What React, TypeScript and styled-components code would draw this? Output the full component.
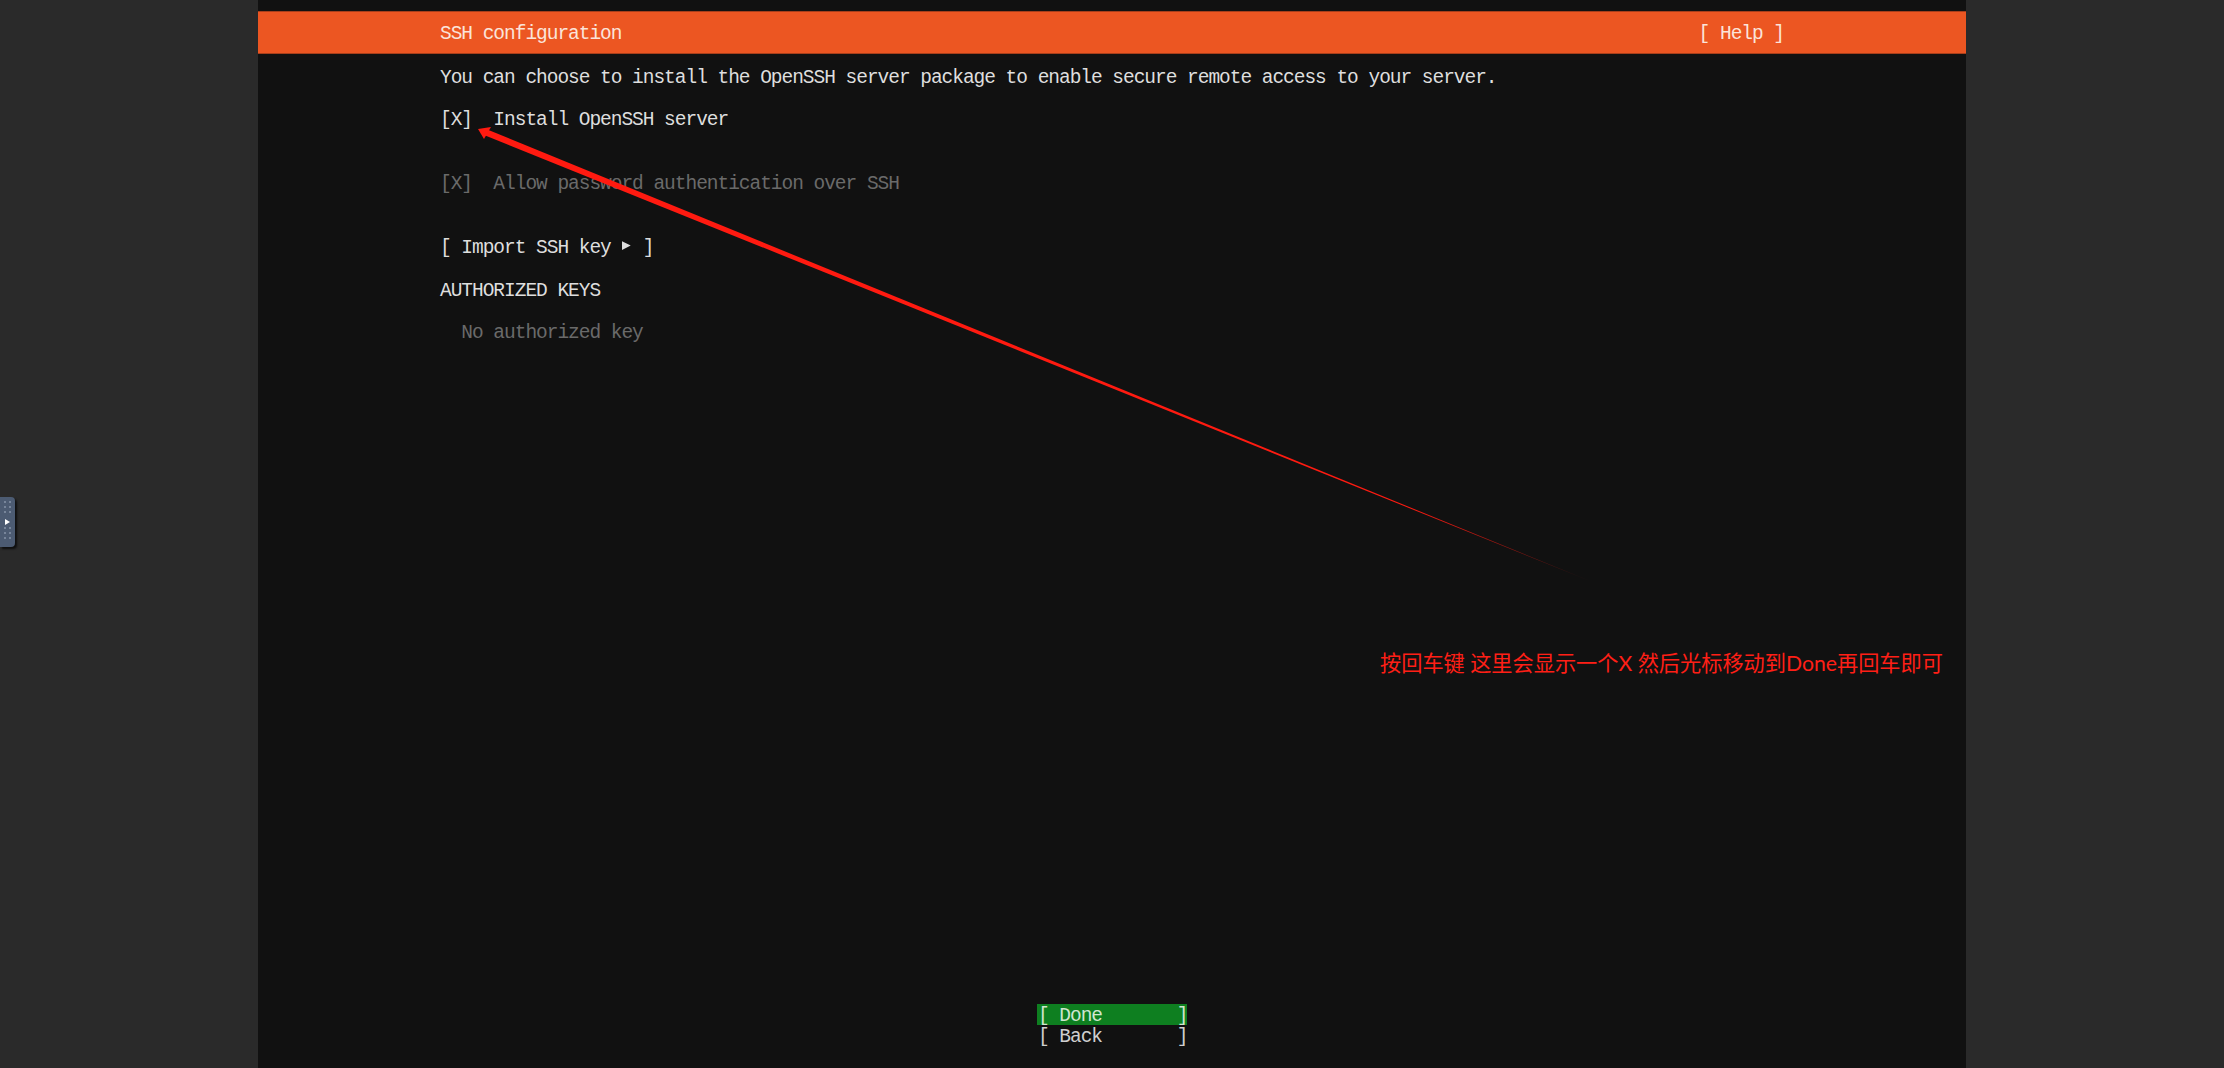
import React from 'react';
import styled, { createGlobalStyle } from 'styled-components';

const GlobalStyle = createGlobalStyle`
  html, body {
    margin: 0;
    padding: 0;
    background: #2a2a2a;
    overflow: hidden;
  }
`;

const Page = styled.div`
  position: relative;
  width: 2224px;
  height: 1068px;
  overflow: hidden;
  background: #2a2a2a;
`;

const Terminal = styled.main`
  box-sizing: border-box;
  width: 1708px;
  height: 1068px;
  margin: 0 auto;
  padding-top: 11px;
  padding-bottom: 22px;
  display: flex;
  flex-direction: column;
  background: #111111;
  font-family: 'Liberation Mono', 'DejaVu Sans Mono', monospace;
  font-size: 19.5px;
  letter-spacing: -1.03px;
  line-height: 21.33px;
  color: #dedede;
  white-space: pre;
`;

const TitleBar = styled.header`
  box-sizing: border-box;
  height: 43px;
  padding: 5px 182px 0;
  display: flex;
  align-items: center;
  justify-content: space-between;
  background: #ec5622;
  border-top: 1px solid #a83f1b;
  border-bottom: 1px solid #a83f1b;
  color: #fbe4da;
`;

const Body = styled.section`
  padding: 13.5px 182px 0;
  display: flex;
  flex-direction: column;
`;

const Line = styled.div<{ $dim?: boolean; $after?: number }>`
  height: 21.33px;
  margin-bottom: ${(p) => (p.$after ?? 1) * 21.33}px;
  color: ${(p) => (p.$dim ? '#6a6a6a' : '#dedede')};
`;

const TriangleIcon = styled.svg`
  display: inline-block;
  width: 10.67px;
  height: 12px;
  vertical-align: 1px;
`;

const ButtonStack = styled.nav`
  margin-top: auto;
  display: flex;
  flex-direction: column;
  align-items: center;
`;

const TermButton = styled.div<{ $focused?: boolean }>`
  box-sizing: border-box;
  width: 150px;
  height: 21px;
  padding: 2px 1px 0;
  background: ${(p) => (p.$focused ? '#0e7f20' : 'transparent')};
  color: ${(p) => (p.$focused ? '#d0e6d0' : '#cfcfcf')};
`;

const Note = styled.div`
  position: absolute;
  left: 1380px;
  top: 649px;
  font-family: Lato, 'Noto Sans CJK SC', sans-serif;
  font-size: 21.2px;
  line-height: 28px;
  color: #ff1f16;
  white-space: pre;
`;

const ArrowLayer = styled.svg`
  position: absolute;
  left: 0;
  top: 0;
  pointer-events: none;
`;

const SideHandle = styled.div`
  position: absolute;
  left: 0;
  top: 497px;
  width: 15px;
  height: 50px;
  background: #4c5b72;
  border-radius: 0 4px 4px 0;
  box-shadow: 2px 2px 2px rgba(0, 0, 0, 0.65);
`;

const HandleIcon = styled.svg`
  display: block;
`;

const gripRows = [0, 5, 10, 26, 31, 36];

const App = () => (
  <Page>
    <GlobalStyle />
    <Terminal>
      <TitleBar>
        <span>SSH configuration</span>
        <span>[ Help ]</span>
      </TitleBar>
      <Body>
        <Line>You can choose to install the OpenSSH server package to enable secure remote access to your server.</Line>
        <Line $after={2}>[X]  Install OpenSSH server</Line>
        <Line $dim $after={2}>[X]  Allow password authentication over SSH</Line>
        <Line>
          [ Import SSH key{' '}
          <TriangleIcon viewBox="0 0 11 12">
            <polygon points="1,1 10,5.5 1,10" fill="#dedede" />
          </TriangleIcon>{' '}
          ]
        </Line>
        <Line>AUTHORIZED KEYS</Line>
        <Line $dim>  No authorized key</Line>
      </Body>
      <ButtonStack>
        <TermButton $focused>[ Done       ]</TermButton>
        <TermButton>[ Back       ]</TermButton>
      </ButtonStack>
    </Terminal>

    <ArrowLayer width="2224" height="1068" viewBox="0 0 2224 1068">
      <defs>
        <linearGradient id="fade" gradientUnits="userSpaceOnUse" x1="478" y1="129" x2="1577" y2="575">
          <stop offset="0" stopColor="#ff1a10" />
          <stop offset="0.85" stopColor="#ff1a10" />
          <stop offset="1" stopColor="#ff1a10" stopOpacity="0.25" />
        </linearGradient>
      </defs>
      <polygon points="1590,581 486,129 484,135" fill="url(#fade)" />
      <polygon points="478,129 491,127 484,139" fill="#ff1a10" />
    </ArrowLayer>

    <Note>按回车键 这里会显示一个X 然后光标移动到Done再回车即可</Note>

    <SideHandle>
      <HandleIcon width="15" height="50" viewBox="0 0 15 50">
        {gripRows.map((y) => (
          <g key={y} fill="#77859a">
            <rect x="4" y={y + 4} width="2" height="2" />
            <rect x="9" y={y + 4} width="2" height="2" />
          </g>
        ))}
        <polygon points="5,22 10,25 5,28" fill="#ffffff" />
      </HandleIcon>
    </SideHandle>
  </Page>
);

export default App;
